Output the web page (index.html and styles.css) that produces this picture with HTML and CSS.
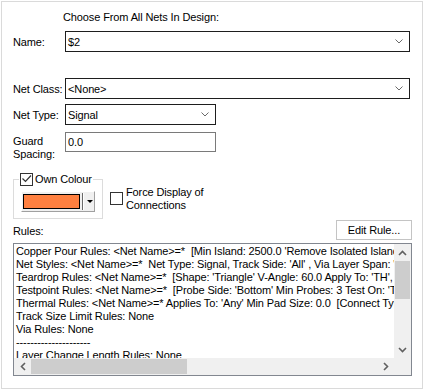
FILE: index.html
```html
<!DOCTYPE html>
<html lang="en">
<head>
    <meta charset="UTF-8">
    <title>Net Properties</title>
    <link rel="stylesheet" href="styles.css">
</head>
<body>
    <div class="panel">
        <div class="title">Choose From All Nets In Design:</div>

        <div class="row name-row">
            <span class="lbl">Name:</span>
            <div class="combo wide">
                <span>$2</span>
                <svg class="chev" width="8" height="5" viewBox="0 0 8 5"><polyline points="0.5,0.5 4,4 7.5,0.5" /></svg>
            </div>
        </div>

        <div class="row class-row">
            <span class="lbl">Net Class:</span>
            <div class="combo wide">
                <span>&lt;None&gt;</span>
                <svg class="chev" width="8" height="5" viewBox="0 0 8 5"><polyline points="0.5,0.5 4,4 7.5,0.5" /></svg>
            </div>
        </div>

        <div class="row type-row">
            <span class="lbl">Net Type:</span>
            <div class="combo narrow">
                <span>Signal</span>
                <svg class="chev" width="8" height="5" viewBox="0 0 8 5"><polyline points="0.5,0.5 4,4 7.5,0.5" /></svg>
            </div>
        </div>

        <div class="row guard-row">
            <span class="lbl two">Guard<br>Spacing:</span>
            <div class="edit narrow">0.0</div>
        </div>

        <div class="mid">
            <fieldset class="group">
                <legend>
                    <span class="check on">
                        <svg width="11" height="11" viewBox="0 0 11 11"><polyline points="1.5,4.5 4.5,7.5 10,1.5" /></svg>
                    </span>
                    <span>Own Colour</span>
                </legend>
                <div class="colour-btn">
                    <span class="swatch"></span>
                    <span class="sep"></span>
                    <span class="tri"></span>
                </div>
            </fieldset>
            <div class="force">
                <span class="check"></span>
                <span class="force-text">Force Display of<br>Connections</span>
            </div>
        </div>

        <div class="rules-head">
            <span class="rules-lbl">Rules:</span>
            <div class="edit-rule">Edit Rule...</div>
        </div>

        <div class="rules">
            <div class="rules-text">
                <div>Copper Pour Rules: &lt;Net Name&gt;=*&nbsp; [Min Island: 2500.0 'Remove Isolated Islands: Yes' Min Width: 10.0]</div>
                <div>Net Styles: &lt;Net Name&gt;=*&nbsp; Net Type: Signal, Track Side: 'All' , Via Layer Span: 'All'</div>
                <div>Teardrop Rules: &lt;Net Name&gt;=*&nbsp; [Shape: 'Triangle' V-Angle: 60.0 Apply To: 'TH', 'SMD']</div>
                <div>Testpoint Rules: &lt;Net Name&gt;=*&nbsp; [Probe Side: 'Bottom' Min Probes: 3 Test On: 'Through Hole']</div>
                <div>Thermal Rules: &lt;Net Name&gt;=* Applies To: 'Any' Min Pad Size: 0.0&nbsp; [Connect Type: 'Direct']</div>
                <div>Track Size Limit Rules: None</div>
                <div>Via Rules: None</div>
                <div>---------------------</div>
                <div>Layer Change Length Rules: None</div>
            </div>
            <div class="vscroll">
                <div class="arrow">
                    <svg width="9" height="6" viewBox="0 0 9 6"><polyline points="1,5 4.5,1.5 8,5" /></svg>
                </div>
                <div class="vthumb"></div>
                <div class="arrow down">
                    <svg width="9" height="6" viewBox="0 0 9 6"><polyline points="1,1 4.5,4.5 8,1" /></svg>
                </div>
            </div>
            <div class="hscroll">
                <div class="arrow">
                    <svg width="6" height="9" viewBox="0 0 6 9"><polyline points="5,1 1.5,4.5 5,8" /></svg>
                </div>
                <div class="hthumb"></div>
                <div class="arrow right">
                    <svg width="6" height="9" viewBox="0 0 6 9"><polyline points="1,1 4.5,4.5 1,8" /></svg>
                </div>
            </div>
            <div class="corner"></div>
        </div>
    </div>
</body>
</html>
```

FILE: styles.css
```css
body {
    margin: 0;
    background: #fff;
    font-family: "Liberation Sans", Arial, sans-serif;
    font-size: 11px;
    letter-spacing: -0.12px;
    color: #000;
}

.panel {
    margin: 1px 0 0 1px;
    width: 422px;
    height: 388px;
    box-sizing: border-box;
    border: 1px solid #dadada;
    padding: 8px 11px 0 11px;
}

.title {
    margin-left: 50px;
    line-height: 14px;
}

.row {
    display: flex;
    align-items: center;
}

.lbl {
    width: 52px;
    flex: none;
    line-height: 14px;
}

.name-row {
    margin-top: 7px;
}

.class-row {
    margin-top: 26px;
}

.type-row {
    margin-top: 5px;
}

.guard-row {
    margin-top: 7px;
    align-items: flex-start;
}

.lbl.two {
    padding-top: 3px;
    line-height: 13px;
}

.combo {
    height: 21px;
    box-sizing: border-box;
    border: 1px solid #1e1e1e;
    display: flex;
    align-items: center;
    justify-content: space-between;
    padding: 0 6px 0 2px;
}

.combo.wide {
    flex: 1;
    margin-right: 1px;
}

.narrow {
    width: 151px;
}

.chev polyline {
    fill: none;
    stroke: #6a6a6a;
    stroke-width: 1;
}

.edit {
    height: 20px;
    box-sizing: border-box;
    border: 1px solid #7a7a7a;
    padding: 0 2px;
    line-height: 18px;
}

.mid {
    margin-top: 12px;
    display: flex;
    align-items: flex-start;
}

.group {
    margin: 0;
    width: 90px;
    box-sizing: border-box;
    border: 1px solid #dcdcdc;
    padding: 0 5px 6px 5px;
}

.group legend {
    padding: 0 1px;
    display: flex;
    align-items: center;
    line-height: 13px;
}

.check {
    width: 13px;
    height: 13px;
    box-sizing: border-box;
    border: 1px solid #333;
    background: #fff;
    display: inline-flex;
    flex: none;
}

.check svg polyline {
    fill: none;
    stroke: #333;
    stroke-width: 1.2;
}

.group legend .check {
    margin-right: 2px;
}

.colour-btn {
    margin: 5px 0 0 2px;
    width: 74px;
    height: 21px;
    box-sizing: border-box;
    background: #f0f0f0;
    border: 1px solid;
    border-color: #fff #a0a0a0 #a0a0a0 #fff;
    display: flex;
    align-items: center;
    padding-left: 1px;
}

.swatch {
    width: 57px;
    height: 15px;
    box-sizing: border-box;
    background: #ff8040;
    border: 1px solid #000;
}

.sep {
    margin-left: 2px;
    width: 1px;
    height: 17px;
    background: #696969;
    box-shadow: 1px 0 0 #fff;
}

.tri {
    margin-left: 4px;
    width: 0;
    height: 0;
    border-left: 3px solid transparent;
    border-right: 3px solid transparent;
    border-top: 3px solid #000;
}

.force {
    margin: 13px 0 0 7px;
    display: flex;
    align-items: flex-start;
}

.force .check {
    margin-top: 6px;
}

.force-text {
    margin-left: 3px;
    line-height: 13px;
}

.rules-head {
    margin-top: 1px;
    display: flex;
    align-items: center;
    justify-content: space-between;
}

.rules-lbl {
    padding-top: 2px;
    line-height: 14px;
}

.edit-rule {
    width: 76px;
    height: 20px;
    box-sizing: border-box;
    border: 1px solid #c4c4c4;
    background: #fff;
    text-align: center;
    line-height: 18px;
    margin-right: -1px;
}

.rules {
    margin-top: 3px;
    margin-right: -1px;
    height: 133px;
    box-sizing: border-box;
    border: 1px solid #828790;
    display: grid;
    grid-template-columns: 1fr 17px;
    grid-template-rows: 1fr 17px;
}

.rules-text {
    overflow: hidden;
    white-space: nowrap;
    padding: 1px 0 0 2px;
    line-height: 13px;
}

.vscroll {
    background: #f0f0f0;
    display: flex;
    flex-direction: column;
}

.hscroll {
    background: #f0f0f0;
    display: flex;
}

.corner {
    background: #f0f0f0;
}

.arrow {
    width: 17px;
    height: 17px;
    flex: none;
    display: flex;
    align-items: center;
    justify-content: center;
}

.arrow polyline {
    fill: none;
    stroke: #606060;
    stroke-width: 1.6;
}

.vscroll .down {
    margin-top: auto;
}

.hscroll .right {
    margin-left: auto;
}

.vthumb {
    margin: 0 1px;
    height: 38px;
    background: #cdcdcd;
}

.hthumb {
    margin: 1px 0;
    width: 156px;
    background: #cdcdcd;
}
```
